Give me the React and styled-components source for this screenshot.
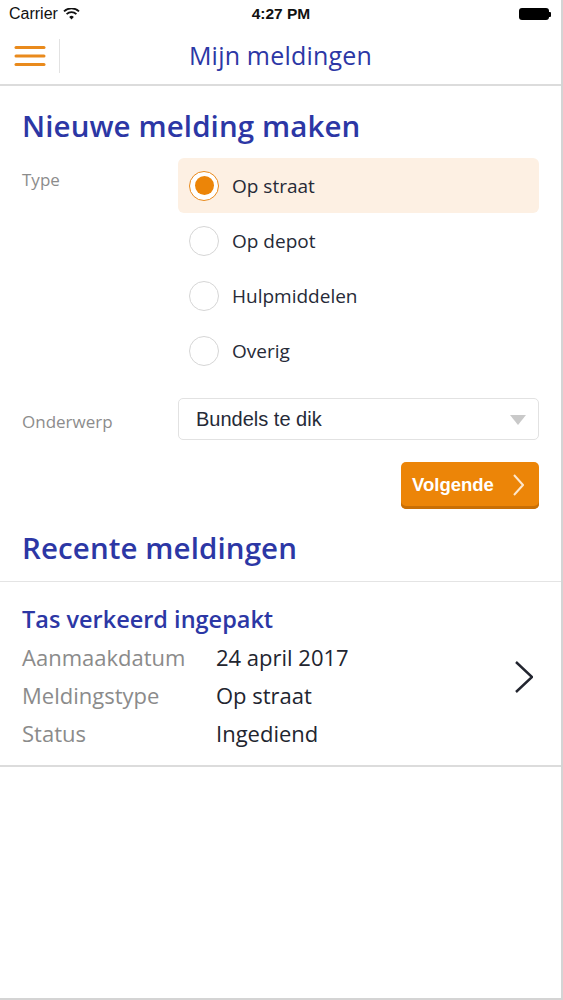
import React from "react";
import styled, { createGlobalStyle } from "styled-components";

const GlobalStyle = createGlobalStyle`
  html, body {
    margin: 0;
    padding: 0;
    background: #fff;
  }
  body {
    font-family: "Open Sans", "Noto Sans", sans-serif;
  }
`;

const Screen = styled.div`
  width: 561px;
  height: 998px;
  background: #fff;
  border-right: 2px solid #d4d4d4;
  border-bottom: 2px solid #d4d4d4;
  display: flex;
  flex-direction: column;
`;

const StatusBar = styled.div`
  height: 28px;
  display: grid;
  grid-template-columns: 1fr auto 1fr;
  align-items: center;
  padding: 0 8px 0 9px;
  font-family: "Liberation Sans", Arial, sans-serif;
  font-size: 16px;
  color: #111;
`;

const Carrier = styled.div`
  display: flex;
  align-items: center;
  gap: 5px;
`;

const Clock = styled.div`
  font-weight: bold;
  font-size: 15.5px;
`;

const Battery = styled.div`
  justify-self: end;
  display: flex;
  align-items: center;
  margin-right: 2px;
  &::before {
    content: "";
    width: 30px;
    height: 12px;
    background: #000;
    border-radius: 3px;
  }
  &::after {
    content: "";
    width: 2px;
    height: 5px;
    background: #000;
    border-radius: 0 1px 1px 0;
  }
`;

const NavBar = styled.div`
  height: 56px;
  display: flex;
  align-items: center;
  border-bottom: 2px solid #dcdcdc;
`;

const MenuButton = styled.div`
  width: 60px;
  height: 34px;
  display: flex;
  align-items: center;
  padding-left: 14px;
  box-sizing: border-box;
  border-right: 1px solid #e2e2e2;
`;

const NavTitle = styled.div`
  flex: 1;
  text-align: center;
  margin-right: 60px;
  padding-bottom: 3px;
  color: #2c37a5;
  font-size: 25px;
  font-weight: 500;
  letter-spacing: 0.2px;
`;

const Content = styled.div`
  padding: 0 22px 0 22px;
`;

const SectionTitle = styled.h1`
  margin: ${(p) => p.$margin || "0"};
  color: #2c37a5;
  font-size: 29.5px;
  font-weight: 600;
  line-height: 40px;
  letter-spacing: 0.1px;
`;

const FormRow = styled.div`
  display: flex;
  align-items: ${(p) => p.$align || "flex-start"};
  margin-top: ${(p) => p.$top || "0"};
`;

const FieldLabel = styled.div`
  width: 156px;
  flex-shrink: 0;
  color: #8c8c8c;
  font-size: 17px;
  padding-top: ${(p) => p.$pt || "0"};
`;

const Options = styled.div`
  flex: 1;
  display: flex;
  flex-direction: column;
`;

const Option = styled.div`
  height: 55px;
  display: flex;
  align-items: center;
  gap: 13px;
  padding-left: 11px;
  background: ${(p) => (p.$selected ? "#fdf0e3" : "transparent")};
  border-radius: 6px;
  color: #262a37;
  font-size: 19px;
`;

const Radio = styled.div`
  width: 30px;
  height: 30px;
  box-sizing: border-box;
  border-radius: 50%;
  border: 1.5px solid ${(p) => (p.$selected ? "#e98a1c" : "#d6d6d6")};
  background: #fff;
  display: flex;
  align-items: center;
  justify-content: center;
  &::after {
    content: "";
    display: ${(p) => (p.$selected ? "block" : "none")};
    width: 19px;
    height: 19px;
    border-radius: 50%;
    background: #ec8508;
  }
`;

const Select = styled.div`
  flex: 1;
  height: 42px;
  box-sizing: border-box;
  border: 1.5px solid #e2e2e2;
  border-radius: 5px;
  display: flex;
  align-items: center;
  justify-content: space-between;
  padding: 0 12px 0 17px;
  font-family: "Liberation Sans", Arial, sans-serif;
  font-size: 20px;
  color: #262a37;
`;

const Caret = styled.div`
  width: 0;
  height: 0;
  border-left: 8px solid transparent;
  border-right: 8px solid transparent;
  border-top: 10px solid #c9c9c9;
  margin-top: 2px;
`;

const Actions = styled.div`
  display: flex;
  justify-content: flex-end;
  margin-top: 22px;
`;

const PrimaryButton = styled.button`
  width: 138px;
  height: 47px;
  border: none;
  border-radius: 5px;
  background: #ec8508;
  box-shadow: inset 0 -3px 0 #c96f05;
  color: #fff;
  font-family: "Liberation Sans", Arial, sans-serif;
  font-weight: bold;
  font-size: 18.5px;
  display: flex;
  align-items: center;
  justify-content: space-between;
  padding: 0 15px 2px 11px;
`;

const Divider = styled.div`
  height: 1px;
  background: #e4e4e4;
`;

const ReportItem = styled.div`
  display: flex;
  align-items: center;
  padding: 19px 28px 13px 22px;
  border-bottom: 2px solid #dcdcdc;
`;

const ReportBody = styled.div`
  flex: 1;
`;

const ReportTitle = styled.div`
  color: #2c37a5;
  font-size: 23.5px;
  font-weight: 600;
  line-height: 36px;
  margin-bottom: 1px;
`;

const DetailRow = styled.div`
  display: flex;
  font-size: 22px;
  line-height: 38px;
`;

const DetailLabel = styled.div`
  width: 194px;
  color: #8b8b8b;
`;

const DetailValue = styled.div`
  color: #22252f;
`;

const Hamburger = () => (
  <svg width="32" height="22" viewBox="0 0 32 22">
    <g stroke="#e98a1c" strokeWidth="3" strokeLinecap="round">
      <line x1="2" y1="2.5" x2="30" y2="2.5" />
      <line x1="2" y1="11" x2="30" y2="11" />
      <line x1="2" y1="19.5" x2="30" y2="19.5" />
    </g>
  </svg>
);

const Wifi = () => (
  <svg width="17" height="12" viewBox="0 0 17 12">
    <path d="M8.5 11.5 L6.2 8.9 A3.4 3.4 0 0 1 10.8 8.9 Z" fill="#111" />
    <path d="M3.6 6.2 A7 7 0 0 1 13.4 6.2" stroke="#111" strokeWidth="1.8" fill="none" />
    <path d="M1 3.4 A10.8 10.8 0 0 1 16 3.4" stroke="#111" strokeWidth="1.8" fill="none" />
  </svg>
);

const Chevron = ({ size = 12, height = 22, color = "#fff", width = 2 }) => (
  <svg width={size} height={height} viewBox={`0 0 ${size} ${height}`}>
    <polyline
      points={`1,1 ${size - 1},${height / 2} 1,${height - 1}`}
      fill="none"
      stroke={color}
      strokeWidth={width}
      strokeLinejoin="miter"
    />
  </svg>
);

const types = ["Op straat", "Op depot", "Hulpmiddelen", "Overig"];

const details = [
  ["Aanmaakdatum", "24 april 2017"],
  ["Meldingstype", "Op straat"],
  ["Status", "Ingediend"],
];

export default function App() {
  return (
    <>
      <GlobalStyle />
      <Screen>
        <StatusBar>
          <Carrier>
            Carrier <Wifi />
          </Carrier>
          <Clock>4:27 PM</Clock>
          <Battery />
        </StatusBar>
        <NavBar>
          <MenuButton>
            <Hamburger />
          </MenuButton>
          <NavTitle>Mijn meldingen</NavTitle>
        </NavBar>

        <Content>
          <SectionTitle $margin="20px 0 12px">Nieuwe melding maken</SectionTitle>
          <FormRow>
            <FieldLabel $pt="10px">Type</FieldLabel>
            <Options>
              {types.map((t, i) => (
                <Option key={t} $selected={i === 0}>
                  <Radio $selected={i === 0} />
                  {t}
                </Option>
              ))}
            </Options>
          </FormRow>
          <FormRow $align="center" $top="20px">
            <FieldLabel $pt="4px">Onderwerp</FieldLabel>
            <Select>
              Bundels te dik
              <Caret />
            </Select>
          </FormRow>
          <Actions>
            <PrimaryButton>
              Volgende
              <Chevron size={11} height={22} color="#fde7cc" width={2} />
            </PrimaryButton>
          </Actions>
          <SectionTitle $margin="19px 0 13px">Recente meldingen</SectionTitle>
        </Content>
        <Divider />
        <ReportItem>
          <ReportBody>
            <ReportTitle>Tas verkeerd ingepakt</ReportTitle>
            {details.map(([l, v]) => (
              <DetailRow key={l}>
                <DetailLabel>{l}</DetailLabel>
                <DetailValue>{v}</DetailValue>
              </DetailRow>
            ))}
          </ReportBody>
          <Chevron size={18} height={32} color="#22252f" width={2.4} />
        </ReportItem>
      </Screen>
    </>
  );
}
